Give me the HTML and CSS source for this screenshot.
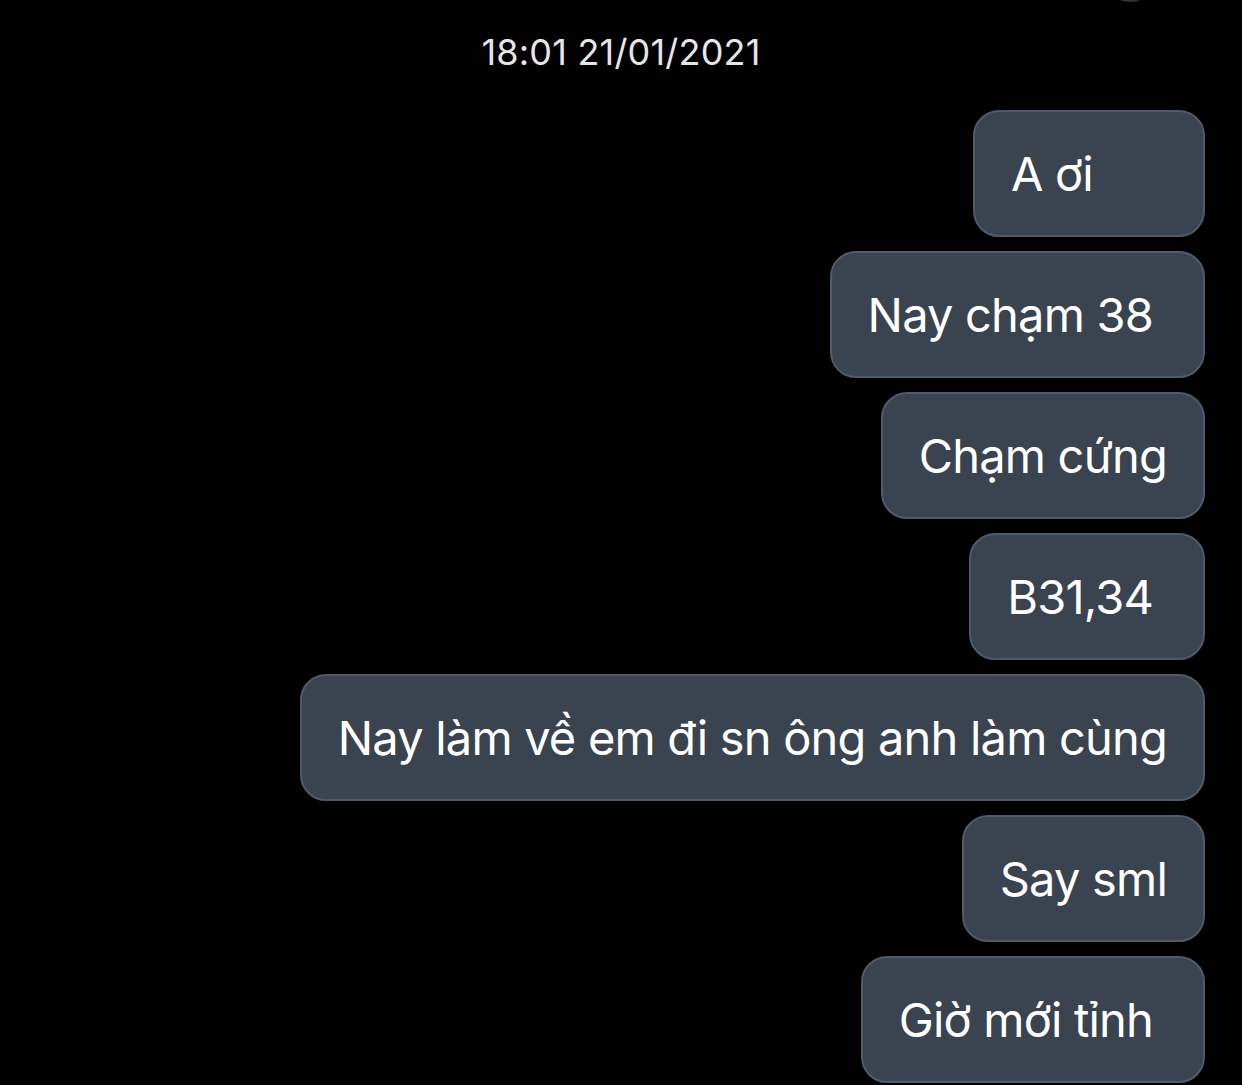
FILE: index.html
```html
<!DOCTYPE html>
<html lang="vi">
<head>
<meta charset="utf-8">
<link rel="stylesheet" href="styles.css">
</head>
<body>
<div class="screen">
  <div class="top-arc"></div>
  <div class="stamp">18:01 21/01/2021</div>
  <div class="thread">
    <div class="bubble b1">A ơi</div>
    <div class="bubble wide-end">Nay chạm 38</div>
    <div class="bubble">Chạm cứng</div>
    <div class="bubble wide-end">B31,34</div>
    <div class="bubble">Nay làm về em đi sn ông anh làm cùng</div>
    <div class="bubble">Say sml</div>
    <div class="bubble wide-end">Giờ mới tỉnh</div>
  </div>
</div>
</body>
</html>
```
FILE: styles.css
```css
html, body {
  margin: 0;
  padding: 0;
  background: #000;
}
.screen {
  position: relative;
  width: 1242px;
  height: 1085px;
  overflow: hidden;
  background: #000;
  font-family: Inter, "Noto Sans", "Liberation Sans", sans-serif;
}
.top-arc {
  position: absolute;
  left: 1100px;
  top: -60px;
  width: 60px;
  height: 60px;
  border-radius: 50%;
  border-bottom: 2px solid #333;
}
.stamp {
  padding-top: 33px;
  height: 38px;
  text-align: center;
  color: #e6e6e6;
  font-size: 36px;
  line-height: 38px;
  letter-spacing: 0.2px;
}
.thread {
  display: flex;
  flex-direction: column;
  align-items: flex-end;
  gap: 14px;
  padding: 39px 37px 0 0;
}
.bubble {
  box-sizing: border-box;
  height: 127px;
  padding: 0 36px;
  display: flex;
  align-items: center;
  background: #3a4350;
  border: 2px solid #4f5a6b;
  border-radius: 26px;
  color: #fff;
  font-size: 47px;
  letter-spacing: -0.8px;
  white-space: nowrap;
}
.b1 {
  min-width: 232px;
}
.wide-end {
  padding-right: 50px;
}
```
